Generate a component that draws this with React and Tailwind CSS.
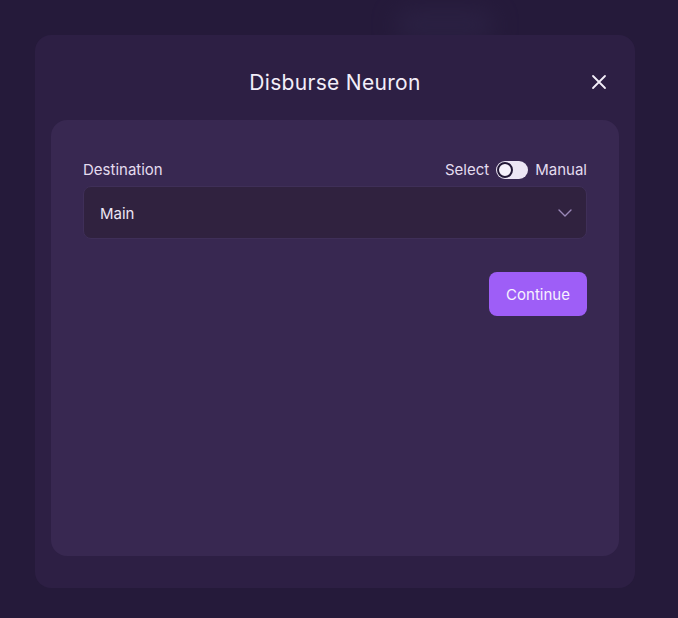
export default function App() {
  return (
    <div className="relative w-[678px] h-[618px] overflow-hidden bg-[#251a3a]" style={{ fontFamily: 'Inter, "Noto Sans", sans-serif' }}>
      <div className="absolute left-[395px] top-[10px] w-[100px] h-[30px] rounded-full bg-[#2e2447] blur-md opacity-70" />
      <div className="absolute left-[35px] top-[35px] w-[600px] h-[553px] rounded-[16px] bg-[#2d1f44] flex flex-col">
        <div className="relative h-[85px] flex items-center justify-center">
          <h2 className="text-[21px] text-[#f3eef9] font-normal tracking-[0.3px] mt-[11px]">Disburse Neuron</h2>
          <button className="absolute right-[28px] top-[39px] text-[#f3eef9]">
            <svg width="16" height="16" viewBox="0 0 16 16" fill="none" stroke="currentColor" strokeWidth="1.8" strokeLinecap="round">
              <path d="M2 2L14 14M14 2L2 14" />
            </svg>
          </button>
        </div>
        <div className="mx-[16px] mb-[32px] flex-1 rounded-[16px] bg-[#382851] px-[32px] pt-[41px] flex flex-col">
          <div className="flex items-center justify-between h-[18px]">
            <span className="text-[15px] text-[#e4dcef]">Destination</span>
            <div className="flex items-center gap-[7px] text-[15px] text-[#e4dcef]">
              <span>Select</span>
              <div className="w-[32px] h-[18px] rounded-full bg-[#ece6f4] relative">
                <div className="absolute left-[1px] top-[1px] w-[16px] h-[16px] rounded-full bg-[#f6f2fb] border-[2px] border-[#221836]" />
              </div>
              <span>Manual</span>
            </div>
          </div>
          <div className="mt-[7px] h-[53px] rounded-[8px] bg-[#30223f] border border-[#3f2f58] flex items-center justify-between pl-[16px] pr-[14px]">
            <span className="text-[15px] text-[#ece6f4] pt-[3px]">Main</span>
            <svg width="14" height="8" viewBox="0 0 14 8" fill="none" stroke="#9a88b8" strokeWidth="1.4" strokeLinecap="round" strokeLinejoin="round">
              <path d="M1 1L7 7L13 1" />
            </svg>
          </div>
          <div className="mt-[33px] flex justify-end">
            <button className="h-[44px] w-[98px] rounded-[8px] bg-[#9e5ef7] text-[15px] text-[#f7f2fe] pt-[3px]">Continue</button>
          </div>
        </div>
      </div>
    </div>
  );
}
